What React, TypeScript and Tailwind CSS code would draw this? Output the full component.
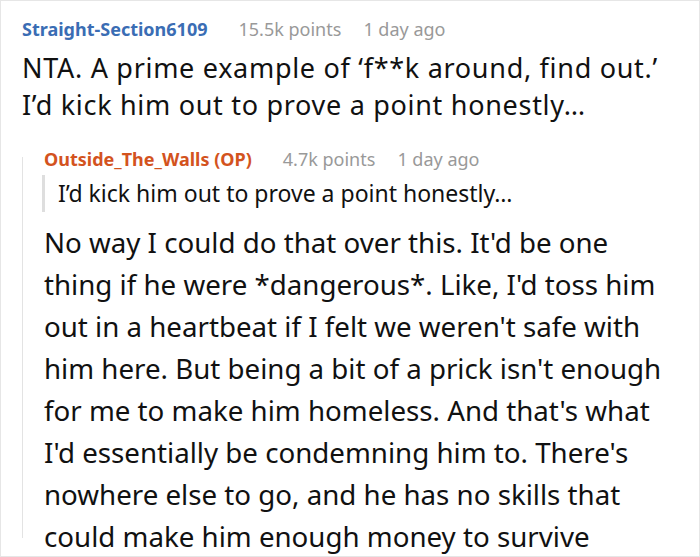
const replyLines = [
  "No way I could do that over this. It'd be one",
  "thing if he were *dangerous*. Like, I'd toss him",
  "out in a heartbeat if I felt we weren't safe with",
  "him here. But being a bit of a prick isn't enough",
  "for me to make him homeless. And that's what",
  "I'd essentially be condemning him to. There's",
  "nowhere else to go, and he has no skills that",
  "could make him enough money to survive",
];

export default function App() {
  return (
    <div className="h-[557px] w-[700px] overflow-hidden border border-[#e6e6e6] bg-white pl-[21px] font-['Noto_Sans',sans-serif] text-[#111]">
      <div className="mt-[16px] flex items-baseline text-[18px] leading-[24px]">
        <span className="font-bold text-[#3a6db4]">Straight-Section6109</span>
        <span className="ml-[31px] text-[#999]">15.5k points</span>
        <span className="ml-[22px] text-[#999]">1 day ago</span>
      </div>

      <p className="mt-[8px] text-[27px] leading-[37px] tracking-[0.7px]">
        NTA. A prime example of ‘f**k around, find out.’
        <br />
        I’d kick him out to prove a point honestly…
      </p>

      <div className="mt-[24px] flex">
        <div className="mt-[10px] h-[381px] w-px shrink-0 bg-[#e3e3e3]" />
        <div className="pl-[21px]">
          <div className="flex items-baseline text-[18px] leading-[24px]">
            <span className="font-bold text-[#d3531e]">Outside_The_Walls (OP)</span>
            <span className="ml-[31px] text-[#999]">4.7k points</span>
            <span className="ml-[22px] text-[#999]">1 day ago</span>
          </div>

          <div className="-ml-[2px] mt-[4px] border-l-[3px] border-[#dedede] pl-[13px] text-[23px] leading-[37px]">
            I’d kick him out to prove a point honestly…
          </div>

          <div className="mt-[9px] text-[27.7px] leading-[42px]">
            {replyLines.map((line) => (
              <div key={line}>{line}</div>
            ))}
          </div>
        </div>
      </div>
    </div>
  );
}
